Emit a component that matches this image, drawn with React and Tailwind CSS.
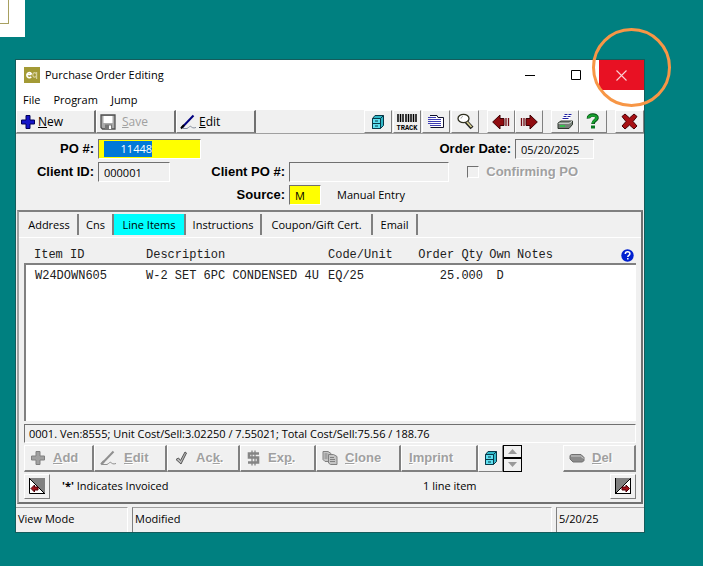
// src/pages/PurchaseOrderEditing.jsx
import { useState } from "react";

const TABS = [
  { name: "Address", width: "w-[58px]" },
  { name: "Cns", width: "w-[35px]" },
  { name: "Line Items", width: "w-[72px]" },
  { name: "Instructions", width: "w-[76px]" },
  { name: "Coupon/Gift Cert.", width: "w-[111px]" },
  { name: "Email", width: "w-[45px]" },
];

const LINES = [
  { id: "W24DOWN605", desc: "W-2 SET 6PC CONDENSED 4U", unit: "EQ/25", qty: "25.000", own: "D", notes: "" },
];

export default function App() {
  const [tab, setTab] = useState("Line Items");

  return (
    <div className="min-h-screen bg-[#008080] font-['Open_Sans',sans-serif] text-[11px] leading-4 text-black">
      {/* corner of the window behind */}
      <div className="h-[37px] w-[25px] bg-white pb-[13px] pr-4">
        <div className="h-full border-b border-r border-[#a8a060]" />
      </div>

      <main className="ml-4 mr-[59px] mt-[23px] bg-[#f0f0f0] outline outline-1 outline-[#145c5c]">
        <TitleBar />
        <Toolbar />
        <OrderForm />

        <section className="mx-px border-b-2 border-l-2 border-r-2 border-t-2 border-b-[#707070] border-l-[#a0a0a0] border-r-[#707070] border-t-[#808080]">
          <nav className="flex h-[25px] items-start pl-0.5 pt-0.5">
            {TABS.map((t) => (
              <Tab key={t.name} {...t} active={t.name === tab} onClick={() => setTab(t.name)} />
            ))}
          </nav>
          <div className="border-t border-white px-[5px] pb-0.5 pt-[9px]">
            <LineTable />
            <div className="mt-[3px] h-[19px] border border-b-white border-l-[#707070] border-r-white border-t-[#707070] pl-1 leading-[18px]">
              0001. Ven:8555; Unit Cost/Sell:3.02250 / 7.55021; Total Cost/Sell:75.56 / 188.76
            </div>
            <LineActions />
            <div className="mt-px flex h-[27px] items-center">
              <IconButton label="Previous order" className="h-[25px] w-[26px]"><CornerIcon /></IconButton>
              <span className="ml-3 w-[361px]"><b>'*'</b> Indicates Invoiced</span>
              <span>1 line item</span>
              <IconButton label="Next order" className="ml-auto h-[25px] w-[26px]"><CornerIcon next /></IconButton>
            </div>
          </div>
        </section>

        <footer className="mt-[3px] flex h-[25px] gap-1 leading-[22px]">
          <div className="w-[112px] border-r border-t border-r-white border-t-[#a0a0a0] pl-0.5">View Mode</div>
          <div className="flex-1 border-l border-r border-t border-l-[#808080] border-r-white border-t-[#a0a0a0] pl-0.5">Modified</div>
          <div className="w-[88px] border-l border-t border-l-[#808080] border-t-[#a0a0a0] pl-0.5">5/20/25</div>
        </footer>
      </main>
    </div>
  );
}

function TitleBar() {
  return (
    <header className="bg-white">
      <div className="flex h-[30px] items-center pl-2">
        <svg width="16" height="16" viewBox="0 0 16 16" fill="none" strokeWidth="1.6">
          <rect width="16" height="16" fill="#a39a35" />
          <path d="M3 7.5h4.4M7.2 9.7A2.4 2.6 0 1 1 7.6 7.5" stroke="#fff" />
          <path d="M12.6 5v7M12.4 7.5a1.8 2.2 0 1 0 0 .8" stroke="#d6d09a" strokeWidth="1.2" />
        </svg>
        <h1 className="ml-[5px] flex-1">Purchase Order Editing</h1>
        <button aria-label="Minimize" className="flex h-full w-[46px] items-center justify-center">
          <svg width="10" height="10" stroke="#000"><path d="M0 5.5h10" /></svg>
        </button>
        <button aria-label="Maximize" className="flex h-full w-[46px] items-center justify-center">
          <svg width="10" height="10" fill="none" stroke="#000"><path d="M.5.5h9v9h-9z" /></svg>
        </button>
        <div className="relative h-full">
          <button aria-label="Close" className="flex h-full w-[45px] items-center justify-center bg-[#e81123]">
            <svg width="11" height="11" stroke="#fbd0d4" strokeWidth="1.1"><path d="M.5.5l10 10M10.5.5l-10 10" /></svg>
          </button>
          <span className="pointer-events-none absolute -left-[7px] -top-[32px] size-[79px] rounded-full border-[3px] border-[#f79646]" />
        </div>
      </div>
      <nav className="flex h-5 items-center gap-[13px] pl-[7px]">
        <button>File</button>
        <button>Program</button>
        <button>Jump</button>
      </nav>
    </header>
  );
}

function Toolbar() {
  return (
    <div className="flex h-6 items-stretch border-b border-[#a0a0a0]">
      <ToolButton icon={<PlusIcon />} k="N" rest="ew" />
      <ToolButton icon={<DiskIcon />} k="S" rest="ave" disabled />
      <ToolButton icon={<PenIcon />} k="E" rest="dit" />
      <div className="ml-auto flex gap-2">
        <div className="flex gap-px">
          <IconButton label="Files" className="w-7"><CabinetIcon /></IconButton>
          <IconButton label="Track" className="w-7"><TrackIcon /></IconButton>
          <IconButton label="Notes" className="w-7"><NotesIcon /></IconButton>
          <IconButton label="Search" className="w-7"><MagnifierIcon /></IconButton>
        </div>
        <div className="flex">
          <IconButton label="Back" className="w-7"><ArrowIcon /></IconButton>
          <IconButton label="Forward" className="w-7"><ArrowIcon right /></IconButton>
        </div>
        <div className="flex">
          <IconButton label="Print" className="w-7"><PrinterIcon /></IconButton>
          <IconButton label="Help" className="w-7"><QuestionIcon /></IconButton>
        </div>
        <IconButton label="Exit" className="w-[29px]"><ExitIcon /></IconButton>
      </div>
    </div>
  );
}

function OrderForm() {
  const label = "text-right font-['Liberation_Sans',sans-serif] text-[13px] font-bold";
  const field = "h-5 border border-b-white border-l-[#707070] border-r-white border-t-[#707070] outline-none";
  return (
    <form className="flex h-[76px] flex-col gap-[3px] pt-[5px]" onSubmit={(e) => e.preventDefault()}>
      <div className="flex items-center gap-1">
        <label htmlFor="po" className={`${label} w-[78px]`}>PO #:</label>
        <div className={`${field} flex w-[103px] items-center bg-[#ffff00] pl-[5px]`}>
          <input id="po" defaultValue="11448" className="w-12 bg-[#0078d7] text-right text-white outline-none" />
        </div>
        <label htmlFor="date" className={`${label} ml-auto`}>Order Date:</label>
        <input id="date" defaultValue="05/20/2025" className={`${field} mr-[50px] w-[79px] pl-[5px]`} />
      </div>
      <div className="flex items-center gap-1">
        <label htmlFor="client" className={`${label} w-[78px]`}>Client ID:</label>
        <input id="client" defaultValue="000001" className={`${field} w-[72px] pl-[5px]`} />
        <label htmlFor="clientpo" className={`${label} w-[111px]`}>Client PO #:</label>
        <input id="clientpo" className={`${field} min-w-0 flex-1`} />
        <label className="ml-3.5 mr-[66px] flex items-center gap-[7px] font-['Liberation_Sans',sans-serif] text-[13px] font-bold text-[#a0a0a0] [text-shadow:1px_1px_#fff]">
          <input type="checkbox" disabled className="size-3 appearance-none border border-b-white border-l-[#707070] border-r-white border-t-[#707070]" />
          Confirming PO
        </label>
      </div>
      <div className="flex items-center gap-1">
        <label htmlFor="source" className={`${label} w-[269px]`}>Source:</label>
        <input id="source" defaultValue="M" className={`${field} w-8 bg-[#ffff00] pl-[5px]`} />
        <span className="ml-3">Manual Entry</span>
      </div>
    </form>
  );
}

function Tab({ name, width, active, onClick }) {
  return (
    <button
      onClick={onClick}
      className={`${width} ${active ? "bg-[#00ffff]" : ""} h-[21px] shrink-0 whitespace-nowrap border-r-2 border-[#808080]`}
    >
      {name}
    </button>
  );
}

function LineTable() {
  return (
    <table className="w-full table-fixed border-collapse text-left font-['Liberation_Mono',monospace] text-[12px] text-[#202020]">
      <colgroup>
        <col className="w-[121px]" />
        <col className="w-[182px]" />
        <col className="w-[82px]" />
        <col className="w-[73px]" />
        <col className="w-[30px]" />
        <col />
      </colgroup>
      <thead>
        <tr className="h-[17px] whitespace-nowrap *:p-0 *:font-normal">
          <th><span className="pl-[9px]">Item ID</span></th>
          <th>Description</th>
          <th>Code/Unit</th>
          <th className="text-right">Order Qty</th>
          <th className="text-center"><span className="pl-1">Own</span></th>
          <th>
            <div className="flex items-center justify-between pl-1 pr-0.5">
              Notes
              <svg width="13" height="13" viewBox="0 0 13 13">
                <circle cx="6.5" cy="6.5" r="6.2" fill="#0020d0" />
                <path d="M4.3 5c0-3 4.6-2.8 4.6-.2 0 1.6-2.1 1.6-2.1 3.2M6.8 9v1.6" fill="none" stroke="#fff" strokeWidth="1.5" />
              </svg>
            </div>
          </th>
        </tr>
      </thead>
      <tbody className="border-b border-l-2 border-r border-t-2 border-b-white border-l-[#808080] border-r-white border-t-[#808080] bg-white">
        {LINES.map((l) => (
          <tr key={l.id} className="h-[22px] whitespace-nowrap *:p-0">
            <td><span className="pl-[9px]">{l.id}</span></td>
            <td>{l.desc}</td>
            <td>{l.unit}</td>
            <td className="text-right">{l.qty}</td>
            <td className="text-center"><span className="pl-1">{l.own}</span></td>
            <td>{l.notes}</td>
          </tr>
        ))}
        <tr className="h-[134px]"><td colSpan={6} /></tr>
      </tbody>
    </table>
  );
}

function LineActions() {
  return (
    <div className="mt-[2px] flex h-[27px]">
      <ActionButton width="w-[70px]" icon={<PlusIcon gray />}><u>A</u>dd</ActionButton>
      <ActionButton width="w-[73px]" icon={<PenIcon gray />}><u>E</u>dit</ActionButton>
      <ActionButton width="w-[73px]" icon={<CheckIcon />}>Ac<u>k</u>.</ActionButton>
      <ActionButton width="w-[76px]" icon={<DollarIcon />}>Ex<u>p</u>.</ActionButton>
      <ActionButton width="w-[85px]" icon={<CloneIcon />}><u>C</u>lone</ActionButton>
      <ActionButton width="w-[77px]"><u>I</u>mprint</ActionButton>
      <IconButton label="Line files" className="w-[25px]"><CabinetIcon /></IconButton>
      <div className="flex w-[19px] flex-col">
        <button aria-label="Up" className="flex flex-1 items-center justify-center border border-black bg-[#f0f0f0]">
          <svg width="9" height="5"><path d="M0 5 4.5 0 9 5z" fill="#999" /></svg>
        </button>
        <button aria-label="Down" className="flex flex-1 items-center justify-center border border-black bg-[#f0f0f0]">
          <svg width="9" height="5"><path d="M0 0 4.5 5 9 0z" fill="#999" /></svg>
        </button>
      </div>
      <div className="ml-auto flex">
        <ActionButton width="w-[73px]" icon={<EraserIcon />}><u>D</u>el</ActionButton>
      </div>
    </div>
  );
}

/* ---------- buttons ---------- */

function ToolButton({ icon, k, rest, disabled }) {
  return (
    <button
      disabled={disabled}
      className="flex w-20 items-center gap-0.5 border-b border-l border-r-2 border-t border-b-[#808080] border-l-white border-r-[#707070] border-t-white pl-[3px] text-[12px] disabled:gap-1.5 disabled:text-[#a0a0a0]"
    >
      {icon}
      <span><u>{k}</u>{rest}</span>
    </button>
  );
}

function ActionButton({ width, icon, children }) {
  return (
    <button
      disabled
      className={`${width} flex items-center gap-[7px] border-b-2 border-l border-r-2 border-t border-b-[#808080] border-l-white border-r-[#808080] border-t-white pl-[5px] font-['Liberation_Sans',sans-serif] text-[13px] font-bold text-[#a0a0a0] [text-shadow:1px_1px_#fff]`}
    >
      {icon}
      <span className="only:pl-0.5">{children}</span>
    </button>
  );
}

function IconButton({ label, className, children }) {
  return (
    <button
      aria-label={label}
      className={`${className} flex items-center justify-center border border-b-[#808080] border-l-white border-r-[#808080] border-t-white`}
    >
      {children}
    </button>
  );
}

/* ---------- icons ---------- */

function PlusIcon({ gray }) {
  return (
    <svg width="16" height="16" viewBox="0 0 16 16">
      <path d="M6 1.5h4V6h4.5v4H10v4.5H6V10H1.5V6H6z" fill={gray ? "#a0a0a0" : "#1515c8"} stroke={gray ? "#808080" : "#00005a"} strokeLinejoin="round" />
    </svg>
  );
}

function DiskIcon() {
  return (
    <svg width="16" height="16" viewBox="0 0 16 16">
      <path d="M1 1h14v14H2.5L1 13.5z" fill="#aaa" stroke="#505050" strokeWidth="1.3" />
      <path d="M3.5 2h9v7h-9z" fill="#fff" />
      <path d="M5 10.5h7V15H5z" fill="#777" />
      <path d="M9 11.5h2V15H9z" fill="#fff" />
    </svg>
  );
}

function PenIcon({ gray }) {
  return (
    <svg width="17" height="16" viewBox="0 0 17 16" fill="none">
      <path d="M2 13.5 13.5 1.5" stroke={gray ? "#909090" : "#000080"} strokeWidth="2" />
      <path d="M1 14.5 4 11" stroke={gray ? "#909090" : "#000"} strokeWidth="2" />
      <path d="M2 14.5h5c2-1 3-3 4-2s2 2 5 1" stroke={gray ? "#909090" : "#8890a0"} />
    </svg>
  );
}

function CabinetIcon() {
  return (
    <svg width="14" height="16" viewBox="0 0 14 16" stroke="#083848">
      <path d="M1.5 4.5 4 1.5h8.5v10L9.5 14.5h-8z" fill="#30b8c8" />
      <path d="M1.5 4.5h8v10h-8z" fill="#60e0f0" />
      <path d="M1.5 9.5h8M9.5 4.5l3-3M4 7h3M4 12h3" />
    </svg>
  );
}

function TrackIcon() {
  return (
    <svg width="22" height="18" viewBox="0 0 22 18">
      <path d="M2 1v8M4.5 1v8M7 1v8M10 1v8M12.5 1v8M15 1v8M17.5 1v8M20 1v8" stroke="#000" strokeWidth="1.5" />
      <text x="11" y="17" fontSize="7" fontWeight="700" fontFamily="Liberation Mono, monospace" textAnchor="middle">TRACK</text>
    </svg>
  );
}

function NotesIcon() {
  return (
    <svg width="18" height="16" viewBox="0 0 18 16" fill="none">
      <path d="M4 2h6l1 1.5h5v10H4z" fill="#fff" />
      <path d="M3 1.5h7l1 2h5.5v10M3.5 13.5h13" stroke="#10102c" />
      <path d="M1 3.5h8M1 5.5h13M1 7.5h13M1 9.5h13M3 11.5h11" stroke="#3c3cb4" />
    </svg>
  );
}

function MagnifierIcon() {
  return (
    <svg width="17" height="17" viewBox="0 0 17 17" fill="none">
      <ellipse cx="6.5" cy="5.5" rx="5.5" ry="4.2" fill="#fff" stroke="#303020" strokeWidth="1.3" />
      <path d="M4 5.5c0-1 1-2 2-2" stroke="#999" />
      <path d="M9.5 9 15 15" stroke="#222" strokeWidth="4" />
      <path d="M10 9 14.5 14" stroke="#d8d090" strokeWidth="1.8" />
    </svg>
  );
}

function ArrowIcon({ right }) {
  return (
    <svg width="18" height="16" viewBox="0 0 18 16" className={right ? "-scale-x-100" : ""}>
      <path d="M.7 8 8 1v3.500h4v7H8V15z" fill="#900c10" stroke="#400004" />
      <path d="M14 4v8M16.500 4v8" stroke="#700810" strokeWidth="1.3" />
    </svg>
  );
}

function PrinterIcon() {
  return (
    <svg width="17" height="17" viewBox="0 0 17 17">
      <path d="M7 1h8l-3 7H4z" fill="#fff" />
      <path d="M7.5 1.5h3M11.5 1.5h3M6.5 3.5h3M10.5 3.5h3M5.5 5.5h6" stroke="#2020a0" />
      <path d="M1 10 4 8h11.5v3.5L12 15.5H1z" fill="#778078" stroke="#303830" />
      <path d="M1.5 10.3H12l3-2" stroke="#d8ddd8" fill="none" />
      <path d="M3 13h5" stroke="#20d040" strokeWidth="1.5" />
    </svg>
  );
}

function QuestionIcon() {
  return (
    <svg width="14" height="17" viewBox="0 0 14 17" fill="none">
      <path d="M2.5 5.5C2 1 11.5 1 11 5c-.3 2.5-4 2.5-4 6" stroke="#064a12" strokeWidth="3.6" />
      <path d="M2.5 5C2.5 1.5 11 1.5 10.7 5c-.3 2.4-4 2.5-4 5.5" stroke="#18a030" strokeWidth="2.4" />
      <path d="M5 12.5h4v3H5z" fill="#0a7820" />
    </svg>
  );
}

function ExitIcon() {
  return (
    <svg width="17" height="17" viewBox="0 0 17 17">
      <path d="M1 3.5 4 1l4.5 4L13 1l3 2.5-4 5 4 4.5-3 3-4.5-4L4 16l-3-3 4-4.5z" fill="#a81014" stroke="#480004" />
    </svg>
  );
}

function CheckIcon() {
  return (
    <svg width="16" height="16" viewBox="0 0 16 16">
      <path d="M3 9.5 5.5 8l2 2.5L12 2l1.5 1L8 14z" fill="#b8b8b8" stroke="#555" />
    </svg>
  );
}

function DollarIcon() {
  return (
    <svg width="15" height="16" viewBox="0 0 15 16" fill="none" stroke="#858585">
      <path d="M13 3.5H3v4h9v5H2" strokeWidth="2.6" />
      <path d="M6 .5v15M9 .5v15" strokeWidth="1.3" />
    </svg>
  );
}

function CloneIcon() {
  return (
    <svg width="16" height="16" viewBox="0 0 16 16" fill="#c4c4c4" stroke="#808080">
      <path d="M1 1.5h5l3 2v8H3l-2-2z" />
      <path d="M6.5 4.5h5l3.5 2v8H8.5l-2-1.5z" />
      <path d="M2.5 4h3M2.5 6h3M2.5 8h3M8 7.5h4M8 9.5h5M8 11.5h5" />
    </svg>
  );
}

function EraserIcon() {
  return (
    <svg width="16" height="16" viewBox="0 0 16 16">
      <path d="M1 5.5 2.5 4.5H12l3 3v3L13.5 12H4L1 9z" fill="#8a8a8a" stroke="#707070" />
      <path d="M2 6h9.5l3 2.5" fill="none" stroke="#ccc" />
    </svg>
  );
}

function CornerIcon({ next }) {
  return (
    <svg width="16" height="16" viewBox="0 0 16 16">
      <path d="M.5.5h15v15H.5z" fill="#fff" />
      <path d={next ? "M0 0h16L0 16z" : "M0 0h16v16z"} fill="#808080" />
      <path d={next ? "M16 0 0 16" : "M0 0 16 16"} stroke="#000" />
      <path d="M.5 0v15.5H16" fill="none" stroke="#000" />
      {next && <path d="M15.5 0v16" stroke="#000" />}
      <path d={next ? "M14.5 10.5 11 7v2H7v3h4v2z" : "M2 10.5 5.5 7v2H9v3H5.5v2z"} fill="#a01018" stroke="#500008" />
    </svg>
  );
}
